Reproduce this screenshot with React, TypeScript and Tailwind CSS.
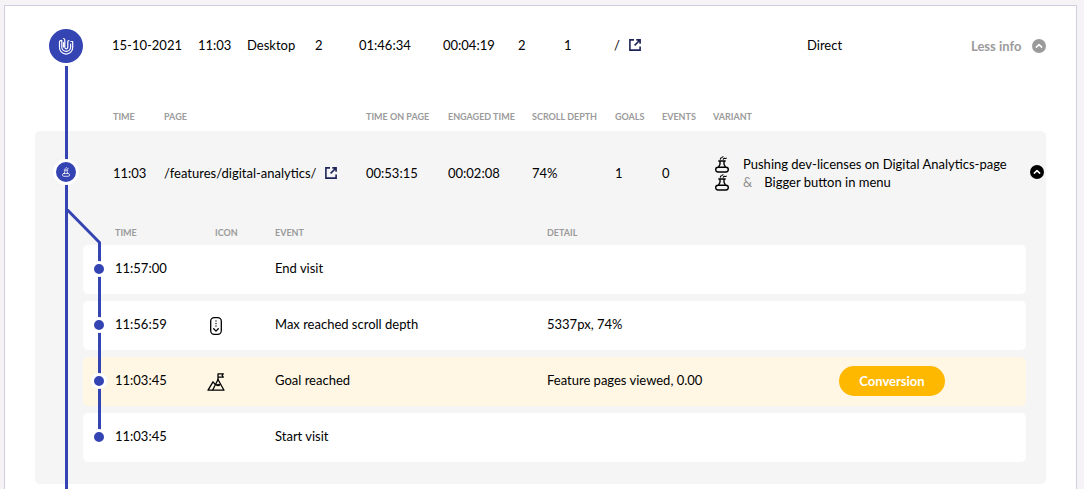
import React, { useState } from "react";

interface VisitEvent { time: string; icon?: "scroll" | "goal"; event: string; detail?: string; conversion?: boolean }

const EVENTS: VisitEvent[] = [
  { time: "11:57:00", event: "End visit" },
  { time: "11:56:59", icon: "scroll", event: "Max reached scroll depth", detail: "5337px, 74%" },
  { time: "11:03:45", icon: "goal", event: "Goal reached", detail: "Feature pages viewed, 0.00", conversion: true },
  { time: "11:03:45", event: "Start visit" },
];

const HEAD = "p-0 text-left align-bottom text-[9px] leading-[10px] font-bold uppercase text-[#9b9b9b] whitespace-nowrap";

const FlaskIcon = ({ className }: { className: string }) => (
  <svg viewBox="0 0 14 17" className={className} fill="none" stroke="currentColor" strokeWidth="1.4" strokeLinecap="round" strokeLinejoin="round" aria-hidden="true">
    <path d="M3.8 5h6.4M5 5.2v3.1L3.6 11M9 5.2v3.1l1.4 2.7" />
    <path d="M3 11.2h8c1.5 0 2.3 1 2.3 2.4S12.500 16 11 16H3C1.500 16 .7 15 .7 13.600S1.500 11.200 3 11.200Z" />
    <path d="M5.300 3.300c0-1 .5-1.500 1.400-1.500.2-.8.7-1.100 1.400-1.100M8.300 3.300c.2-.8.8-1.100 1.500-.9.5.2 1 .1 1.400-.2" strokeWidth="1.1" />
  </svg>
);

const FingerprintIcon = () => (
  <svg viewBox="0 0 16 18" className="h-[18px] w-4" fill="none" stroke="currentColor" strokeWidth="1.200" strokeLinecap="round" strokeLinejoin="round" aria-hidden="true">
    <path d="M1.500 10V5.200C1.500 4 2.500 3.300 3.800 3.300V10a4.400 4.400 0 0 0 8.800 0V7" />
    <path d="M1.500 10.500a6.600 6.600 0 0 0 13.200 0V4.500h-1.800" />
    <path d="M5.500 1.500c1 .1 1.300.7 1.300 1.600v7.200c0 2 3 2 3 0V4.500c0-.6.500-1 1.100-1M5.500 5.500V10" />
  </svg>
);

const OpenIcon = () => (
  <svg viewBox="0 0 12 12" className="size-3" fill="none" stroke="currentColor" strokeWidth="1.600" aria-hidden="true">
    <path d="M5 .9H.9v10.200h10.200V7.500M7.300.9h3.800v3.800M11 1 5.600 6.400" />
  </svg>
);

const ScrollIcon = () => (
  <svg viewBox="0 0 12 18" className="mx-[3px] h-[18px] w-3" fill="none" stroke="currentColor" strokeWidth="1.300" strokeLinecap="round" strokeLinejoin="round" aria-hidden="true">
    <rect x=".7" y=".7" width="10.600" height="16.600" rx="3.500" />
    <path d="M6 4v.1M6 6.500v.1M6 9v.1M3.700 11.800 6 14.100l2.300-2.300" />
  </svg>
);

const GoalIcon = () => (
  <svg viewBox="0 0 18 18" className="size-[18px]" fill="none" stroke="currentColor" strokeWidth="1.300" strokeLinejoin="round" aria-hidden="true">
    <path d="M11 7V.8h5.300l-1.200 1.700 1.200 1.700H11" />
    <path d="M11 6.500 17 17.200H5.600L11 6.500Z" />
    <path d="M8.300 11.500 6 8.800 1 17.200h4.600M8.800 11.300l1.400 1.200.9-1 .9 1 1.200-1.200" />
  </svg>
);

const Chevron = ({ open }: { open: boolean }) => (
  <svg viewBox="0 0 14 14" className={open ? "size-[14px] shrink-0" : "size-[14px] shrink-0 rotate-180"} aria-hidden="true">
    <circle cx="7" cy="7" r="7" fill="currentColor" />
    <path d="M4.300 8.100 7 5.600l2.700 2.500" fill="none" stroke="#fff" strokeWidth="1.500" strokeLinecap="round" strokeLinejoin="round" />
  </svg>
);

const EventTable = () => (
  <div className="relative pr-5 pb-[15px] pl-12">
    {/* branch from the visit line to the event line */}
    <svg viewBox="0 0 38 36" className="absolute -top-[6px] left-[30px] h-9 w-[38px]" fill="none" stroke="#3544b3" strokeWidth="3" aria-hidden="true">
      <path d="M1.500 0 34.500 33.500V36" />
    </svg>
    <div className="absolute top-7 bottom-[54px] left-[63px] w-[3px] bg-[#3544b3]" />
    <table className="w-full table-fixed border-separate border-spacing-x-0 border-spacing-y-[7px]">
      <colgroup>
        <col className="w-8" />
        <col className="w-[92px]" />
        <col className="w-[68px]" />
        <col className="w-[272px]" />
        <col className="w-[292px]" />
        <col />
      </colgroup>
      <thead>
        <tr className="h-4">
          <td className="p-0" />
          <th className={HEAD}>Time</th>
          <th className={`${HEAD} pl-2`}>Icon</th>
          <th className={HEAD}>Event</th>
          <th className={HEAD}>Detail</th>
          <td className="p-0" />
        </tr>
      </thead>
      <tbody>
        {EVENTS.map((e, i) => (
          <tr key={i} className={e.conversion ? "h-[49px] [&>td]:bg-[#fff7e4]" : "h-[49px] [&>td]:bg-white"}>
            <td className="rounded-l-[5px] p-0 pb-0.5 pl-2">
              <span className="relative block size-4 rounded-full border-3 border-white bg-[#3544b3]" />
            </td>
            <td className="p-0 pb-[3px]">{e.time}</td>
            <td className="p-0">
              {e.icon === "scroll" && <ScrollIcon />}
              {e.icon === "goal" && <GoalIcon />}
            </td>
            <td className="p-0 pb-[3px]">{e.event}</td>
            <td className="p-0 pb-[3px]">{e.detail}</td>
            <td className="rounded-r-[5px] p-0 pb-0.5">
              {e.conversion && <button type="button" className="block h-[30px] w-[106px] rounded-full bg-[#ffb800] font-bold text-white">Conversion</button>}
            </td>
          </tr>
        ))}
      </tbody>
    </table>
  </div>
);

export default function App() {
  const [showVisit, setShowVisit] = useState(true);
  const [showEvents, setShowEvents] = useState(true);

  return (
    <div className="flex min-h-screen flex-col bg-[#f5f3f5] pt-[5px] pr-[7px] pl-1 font-['Lato',sans-serif] text-[13px] leading-[18px] text-black">
      <main className="relative flex-1 border border-b-0 border-[#d0cfdf] bg-white">
        <div className="absolute top-[60px] bottom-0 left-[60px] w-[3px] bg-[#3544b3]" />

        <div className="flex h-20 items-center gap-[29px] pr-[30px] pl-11">
          <span className="flex size-[34px] shrink-0 items-center justify-center rounded-full bg-[#3544b3] text-white"><FingerprintIcon /></span>
          <table className="w-full table-fixed">
            <colgroup>
              <col className="w-[86px]" />
              <col className="w-[49px]" />
              <col className="w-[68px]" />
              <col className="w-11" />
              <col className="w-[84px]" />
              <col className="w-[75px]" />
              <col className="w-[46px]" />
              <col className="w-[50px]" />
              <col className="w-[193px]" />
              <col />
              <col className="w-[75px]" />
            </colgroup>
            <tbody>
              <tr className="whitespace-nowrap [&>td]:pb-0.5 [&>td:last-child]:pb-0">
                <td>15-10-2021</td>
                <td>11:03</td>
                <td>Desktop</td>
                <td>2</td>
                <td>01:46:34</td>
                <td>00:04:19</td>
                <td>2</td>
                <td>1</td>
                <td>
                  <span className="flex items-center gap-[9px]">/<a href="#" aria-label="Open page" className="text-[#1c2458]"><OpenIcon /></a></span>
                </td>
                <td>Direct</td>
                <td>
                  <button type="button" onClick={() => setShowVisit(!showVisit)} className="flex w-full items-center justify-between font-bold text-[#9b9b9b]">
                    {showVisit ? "Less info" : "More info"}<Chevron open={showVisit} />
                  </button>
                </td>
              </tr>
            </tbody>
          </table>
        </div>

        {showVisit && (
          <div className="pr-[30px] pl-[30px]">
            <table className="w-full table-fixed border-separate border-spacing-0">
              <colgroup>
                <col className="w-[78px]" />
                <col className="w-[51px]" />
                <col className="w-[202px]" />
                <col className="w-[82px]" />
                <col className="w-[84px]" />
                <col className="w-[83px]" />
                <col className="w-[47px]" />
                <col className="w-[51px]" />
                <col />
                <col className="w-4" />
              </colgroup>
              <thead>
                <tr className="h-[45px] [&>th]:pb-[9px]">
                  <td className="p-0" />
                  <th className={HEAD}>Time</th>
                  <th className={HEAD}>Page</th>
                  <th className={HEAD}>Time on page</th>
                  <th className={HEAD}>Engaged time</th>
                  <th className={HEAD}>Scroll depth</th>
                  <th className={HEAD}>Goals</th>
                  <th className={HEAD}>Events</th>
                  <th className={HEAD}>Variant</th>
                  <td className="p-0" />
                </tr>
              </thead>
              <tbody>
                <tr className="h-[84px] whitespace-nowrap [&>td]:bg-[#f5f5f5]">
                  <td className="rounded-tl-[5px] p-0 pb-0.5 pl-[18px]">
                    <span className="relative flex size-[26px] items-center justify-center rounded-full border-3 border-white bg-[#3544b3] text-white"><FlaskIcon className="h-[10px] w-2" /></span>
                  </td>
                  <td className="p-0">11:03</td>
                  <td className="p-0">
                    <span className="flex items-center gap-[9px]">/features/digital-analytics/<a href="#" aria-label="Open page" className="text-[#1c2458]"><OpenIcon /></a></span>
                  </td>
                  <td className="p-0">00:53:15</td>
                  <td className="p-0">00:02:08</td>
                  <td className="p-0">74%</td>
                  <td className="p-0">1</td>
                  <td className="p-0">0</td>
                  <td className="p-0">
                    <div className="flex items-center gap-[14px] pl-0.5"><FlaskIcon className="h-[17px] w-[14px]" />Pushing dev-licenses on Digital Analytics-page</div>
                    <div className="flex items-center gap-[14px] pl-0.5"><FlaskIcon className="h-[17px] w-[14px]" /><span className="flex gap-3"><span className="text-[#8f8f8f]">&amp;</span>Bigger button in menu</span></div>
                  </td>
                  <td className="rounded-tr-[5px] p-0 pb-0.5">
                    <button type="button" aria-label="Toggle events" onClick={() => setShowEvents(!showEvents)} className="block"><Chevron open={showEvents} /></button>
                  </td>
                </tr>
                {showEvents && (
                  <tr>
                    <td colSpan={10} className="rounded-b-[5px] bg-[#f5f5f5] p-0"><EventTable /></td>
                  </tr>
                )}
              </tbody>
            </table>
          </div>
        )}
      </main>
    </div>
  );
}
